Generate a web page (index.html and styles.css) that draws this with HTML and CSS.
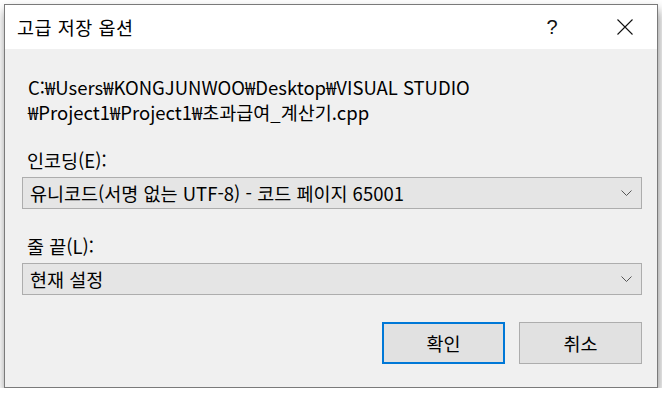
FILE: index.html
```html
<!DOCTYPE html>
<html lang="ko">
<head>
    <meta charset="UTF-8">
    <meta name="viewport" content="width=device-width, initial-scale=1.0">
    <title>고급 저장 옵션</title>
    <link rel="stylesheet" href="styles.css">
</head>
<body>
    <div class="dialog">
        <div class="titlebar">
            <span class="title">고급 저장 옵션</span>
            <div class="title-buttons">
                <span class="help">?</span>
                <svg class="close" width="16" height="16" viewBox="0 0 16 16">
                    <path d="M0.5 0.5 L15.5 15.5 M15.5 0.5 L0.5 15.5" stroke="#111" stroke-width="1.1" fill="none"/>
                </svg>
            </div>
        </div>

        <div class="content">
            <!-- 저장할 파일 경로 -->
            <p class="path">C:₩Users₩KONGJUNWOO₩Desktop₩VISUAL STUDIO<br>₩Project1₩Project1₩초과급여_계산기.cpp</p>

            <div class="label">인코딩(E):</div>
            <div class="combo">
                <span>유니코드(서명 없는 UTF-8) - 코드 페이지 65001</span>
                <svg class="chevron" width="11" height="6" viewBox="0 0 11 6">
                    <path d="M0.5 0.5 L5.5 5.5 L10.5 0.5" stroke="#555" stroke-width="1" fill="none"/>
                </svg>
            </div>

            <div class="label">줄 끝(L):</div>
            <div class="combo">
                <span>현재 설정</span>
                <svg class="chevron" width="11" height="6" viewBox="0 0 11 6">
                    <path d="M0.5 0.5 L5.5 5.5 L10.5 0.5" stroke="#555" stroke-width="1" fill="none"/>
                </svg>
            </div>

            <div class="actions">
                <button class="btn btn-default">확인</button>
                <button class="btn">취소</button>
            </div>
        </div>
    </div>
</body>
</html>
```

FILE: styles.css
```css
body {
    margin: 0;
    padding: 0;
    background-color: #ffffff;
    font-family: 'Noto Sans CJK KR', 'Noto Sans', sans-serif;
    font-size: 18.5px;
    color: #000;
}

.dialog {
    margin: 4px 0 0 4px;
    width: 652px;
    height: 382px;
    border: 1px solid #7a7a7a;
    background: #f0f0f0;
    box-shadow: 1px 6px 10px rgba(0, 0, 0, 0.45);
    display: flex;
    flex-direction: column;
}

.titlebar {
    height: 44px;
    background: #fff;
    display: flex;
    align-items: center;
    justify-content: space-between;
    padding-left: 12px;
}

.title {
    font-size: 18.5px;
    letter-spacing: 0.5px;
}

.title-buttons {
    display: flex;
    align-items: center;
    height: 100%;
}

.help {
    width: 46px;
    text-align: center;
    font-size: 20px;
    font-family: 'Liberation Sans', sans-serif;
    color: #111;
    margin-right: 42px;
}

.close {
    margin-right: 24px;
}

.content {
    flex: 1;
    padding: 26px 15px 0 17px;
}

.path {
    margin: 0 0 0 6px;
    line-height: 25px;
    height: 50px;
}

.label {
    margin: 23px 0 0 5px;
    height: 24px;
    line-height: 24px;
}

.combo {
    height: 30px;
    border: 1px solid #adadad;
    background: #e5e5e5;
    display: flex;
    align-items: center;
    justify-content: space-between;
    padding: 0 8px 0 7px;
}

.chevron {
    margin-right: 1px;
}

.label + .combo {
    margin-top: 5px;
}

.combo + .label {
    margin-top: 25px;
}

.actions {
    display: flex;
    justify-content: flex-end;
    gap: 14px;
    margin-top: 27px;
}

.btn {
    width: 123px;
    height: 42px;
    border: 1px solid #adadad;
    background: #e1e1e1;
    font-family: 'Noto Sans CJK KR', sans-serif;
    font-size: 18.5px;
    color: #000;
    padding: 0;
}

.btn-default {
    border: 2px solid #0078d7;
}
```
